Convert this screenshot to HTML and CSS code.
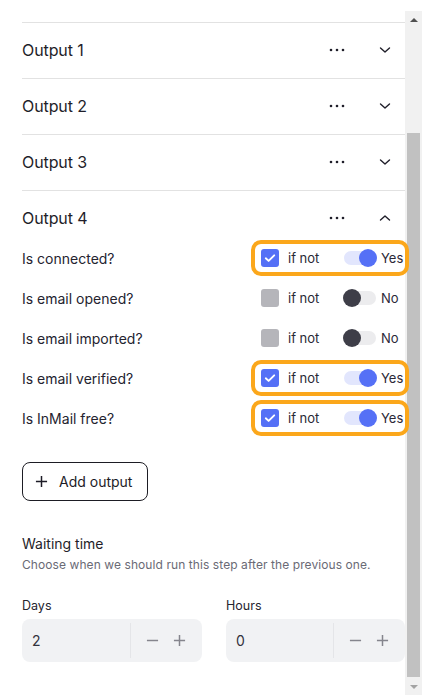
FILE: index.html
```html
<!DOCTYPE html>
<html>
<head>
<meta charset="utf-8">
<link rel="stylesheet" href="styles.css">
</head>
<body>
<div class="page">
  <main class="content">
    <section class="output">
      <div class="output-head">
        <span class="output-title">Output 1</span>
        <div class="head-icons">
          <svg class="icon" viewBox="0 0 20 20"><circle cx="4" cy="10" r="1.3"/><circle cx="10" cy="10" r="1.3"/><circle cx="16" cy="10" r="1.3"/></svg>
          <svg class="icon chev" viewBox="0 0 20 20"><path d="M5.5 8l4.5 4 4.5-4"/></svg>
        </div>
      </div>
    </section>
    <section class="output">
      <div class="output-head">
        <span class="output-title">Output 2</span>
        <div class="head-icons">
          <svg class="icon" viewBox="0 0 20 20"><circle cx="4" cy="10" r="1.3"/><circle cx="10" cy="10" r="1.3"/><circle cx="16" cy="10" r="1.3"/></svg>
          <svg class="icon chev" viewBox="0 0 20 20"><path d="M5.5 8l4.5 4 4.5-4"/></svg>
        </div>
      </div>
    </section>
    <section class="output">
      <div class="output-head">
        <span class="output-title">Output 3</span>
        <div class="head-icons">
          <svg class="icon" viewBox="0 0 20 20"><circle cx="4" cy="10" r="1.3"/><circle cx="10" cy="10" r="1.3"/><circle cx="16" cy="10" r="1.3"/></svg>
          <svg class="icon chev" viewBox="0 0 20 20"><path d="M5.5 8l4.5 4 4.5-4"/></svg>
        </div>
      </div>
    </section>
    <section class="output open">
      <div class="output-head">
        <span class="output-title">Output 4</span>
        <div class="head-icons">
          <svg class="icon" viewBox="0 0 20 20"><circle cx="4" cy="10" r="1.3"/><circle cx="10" cy="10" r="1.3"/><circle cx="16" cy="10" r="1.3"/></svg>
          <svg class="icon chev" viewBox="0 0 20 20"><path d="M5.5 12l4.5-4 4.5 4"/></svg>
        </div>
      </div>
      <div class="conditions">
        <div class="cond">
          <span class="cond-label">Is connected?</span>
          <div class="ctrl hl">
            <span class="check on"><svg viewBox="0 0 18 18"><path d="M4.8 9.3l2.8 2.6 5.6-5.6"/></svg></span>
            <span class="ifnot">if not</span>
            <span class="toggle on"></span>
            <span class="val">Yes</span>
          </div>
        </div>
        <div class="cond">
          <span class="cond-label">Is email opened?</span>
          <div class="ctrl">
            <span class="check"></span>
            <span class="ifnot">if not</span>
            <span class="toggle"></span>
            <span class="val">No</span>
          </div>
        </div>
        <div class="cond">
          <span class="cond-label">Is email imported?</span>
          <div class="ctrl">
            <span class="check"></span>
            <span class="ifnot">if not</span>
            <span class="toggle"></span>
            <span class="val">No</span>
          </div>
        </div>
        <div class="cond">
          <span class="cond-label">Is email verified?</span>
          <div class="ctrl hl">
            <span class="check on"><svg viewBox="0 0 18 18"><path d="M4.8 9.3l2.8 2.6 5.6-5.6"/></svg></span>
            <span class="ifnot">if not</span>
            <span class="toggle on"></span>
            <span class="val">Yes</span>
          </div>
        </div>
        <div class="cond">
          <span class="cond-label">Is InMail free?</span>
          <div class="ctrl hl">
            <span class="check on"><svg viewBox="0 0 18 18"><path d="M4.8 9.3l2.8 2.6 5.6-5.6"/></svg></span>
            <span class="ifnot">if not</span>
            <span class="toggle on"></span>
            <span class="val">Yes</span>
          </div>
        </div>
      </div>
    </section>

    <button class="add-btn">
      <svg viewBox="0 0 14 14"><path d="M7 1v12M1 7h12"/></svg>
      <span>Add output</span>
    </button>

    <section class="waiting">
      <h3 class="wait-title">Waiting time</h3>
      <p class="wait-desc">Choose when we should run this step after the previous one.</p>
      <div class="fields">
        <div class="field">
          <label class="field-label">Days</label>
          <div class="stepper">
            <span class="step-val">2</span>
            <span class="step-btns">
              <svg viewBox="0 0 14 14"><path d="M1 7h12"/></svg>
              <svg viewBox="0 0 14 14"><path d="M7 1v12M1 7h12"/></svg>
            </span>
          </div>
        </div>
        <div class="field">
          <label class="field-label">Hours</label>
          <div class="stepper">
            <span class="step-val">0</span>
            <span class="step-btns">
              <svg viewBox="0 0 14 14"><path d="M1 7h12"/></svg>
              <svg viewBox="0 0 14 14"><path d="M7 1v12M1 7h12"/></svg>
            </span>
          </div>
        </div>
      </div>
    </section>
  </main>

  <div class="scrollbar">
    <div class="sb-btn"><span class="tri up"></span></div>
    <div class="sb-track"><div class="sb-thumb"></div></div>
    <div class="sb-btn"><span class="tri down"></span></div>
  </div>
</div>
</body>
</html>
```

FILE: styles.css
```css
* { box-sizing: border-box; }
html, body {
  margin: 0;
  padding: 0;
  background: #ffffff;
  font-family: "Inter", "Noto Sans", sans-serif;
  color: #22212d;
  overflow: hidden;
}
.page {
  display: flex;
  width: 422px;
  height: 695px;
}
.content {
  width: 405px;
  flex: none;
  padding: 22px 0 0 22px;
}
.output {
  border-top: 1px solid #e2e2e2;
}
.output-head {
  height: 55px;
  display: flex;
  align-items: center;
  justify-content: space-between;
  padding-right: 10px;
  padding-bottom: 1px;
}
.output.open .output-head {
  height: 49px;
  padding-top: 5px;
  padding-bottom: 0;
}
.output-title {
  font-size: 16px;
  letter-spacing: -0.1px;
  color: #1f1e29;
}
.head-icons {
  display: flex;
  align-items: center;
  gap: 28px;
}
.icon {
  width: 20px;
  height: 20px;
  fill: #1f1e29;
}
.icon.chev {
  fill: none;
  stroke: #1f1e29;
  stroke-width: 1.4;
  stroke-linecap: round;
  stroke-linejoin: round;
}
.conditions {
  display: flex;
  flex-direction: column;
  gap: 4px;
}
.cond {
  height: 36px;
  display: flex;
  align-items: center;
  justify-content: space-between;
}
.cond-label {
  font-size: 14px;
  color: #24232f;
}
.ctrl {
  width: 158px;
  height: 36px;
  margin-right: -4px;
  border: 4px solid transparent;
  border-radius: 10px;
  padding-left: 6px;
  display: flex;
  align-items: center;
}
.ctrl.hl {
  position: relative;
  z-index: 1;
  border-color: #fba71b;
  background: #fff;
}
.check {
  width: 18px;
  height: 18px;
  border-radius: 3px;
  background: #b5b5ba;
  flex: none;
  display: flex;
}
.check.on {
  background: #5570f6;
}
.check svg {
  width: 18px;
  height: 18px;
  fill: none;
  stroke: #fff;
  stroke-width: 1.9;
  stroke-linecap: round;
  stroke-linejoin: round;
}
.ifnot {
  margin-left: 9px;
  width: 55px;
  font-size: 13px;
  color: #2a2936;
}
.toggle {
  position: relative;
  width: 34px;
  height: 18px;
  flex: none;
}
.toggle::before {
  content: "";
  position: absolute;
  left: 1px;
  right: 1px;
  top: 2px;
  height: 14px;
  border-radius: 7px;
  background: #ececee;
}
.toggle::after {
  content: "";
  position: absolute;
  left: 0;
  top: 0;
  width: 18px;
  height: 18px;
  border-radius: 50%;
  background: #3e3e48;
}
.toggle.on::before {
  background: #e2e6fd;
}
.toggle.on::after {
  left: 16px;
  background: #5570f6;
}
.val {
  margin-left: 4px;
  font-size: 13px;
  color: #2b2838;
}
.add-btn {
  margin-top: 26px;
  width: 126px;
  height: 39px;
  border: 1px solid #1d1d24;
  border-radius: 8px;
  background: #fff;
  display: flex;
  align-items: center;
  padding: 0 0 0 12px;
  gap: 11px;
  font-family: inherit;
  font-size: 14px;
  color: #1d1c27;
  cursor: pointer;
}
.add-btn svg {
  width: 13px;
  height: 13px;
  fill: none;
  stroke: #1d1c27;
  stroke-width: 1.6;
}
.waiting {
  margin-top: 33px;
}
.wait-title {
  margin: 0;
  font-size: 14px;
  line-height: 20px;
  font-weight: 400;
  color: #1f1e29;
}
.wait-desc {
  margin: 3px 0 0;
  font-size: 12px;
  line-height: 16px;
  color: #6a6a75;
  letter-spacing: 0.08px;
}
.fields {
  margin-top: 24px;
  display: grid;
  grid-template-columns: 180px 179px;
  gap: 24px;
}
.field {
  display: flex;
  flex-direction: column;
  gap: 5px;
}
.field-label {
  font-size: 12.5px;
  line-height: 17px;
  color: #26252f;
}
.stepper {
  height: 43px;
  background: #f1f2f4;
  border-radius: 8px;
  display: flex;
  align-items: center;
  padding-left: 10px;
}
.step-val {
  flex: 1;
  font-size: 14px;
  color: #33323d;
}
.step-btns {
  height: 35px;
  border-left: 1px solid #e4e5e8;
  display: flex;
  align-items: center;
  gap: 14px;
  padding: 0 16px 0 15px;
}
.step-btns svg {
  width: 13px;
  height: 13px;
  fill: none;
  stroke: #85858d;
  stroke-width: 1.6;
}
.scrollbar {
  width: 17px;
  flex: none;
  margin-top: 11px;
  background: #f1f1f1;
  display: flex;
  flex-direction: column;
}
.sb-btn {
  height: 17px;
  display: flex;
  align-items: center;
  justify-content: center;
}
.tri {
  width: 0;
  height: 0;
  border-left: 4px solid transparent;
  border-right: 4px solid transparent;
}
.tri.up {
  border-bottom: 4px solid #505050;
}
.tri.down {
  border-top: 4px solid #a3a3a3;
}
.sb-track {
  flex: 1;
  display: flex;
  flex-direction: column;
  padding: 105px 2px 1px;
}
.sb-thumb {
  flex: 1;
  background: #c1c1c1;
}
```
